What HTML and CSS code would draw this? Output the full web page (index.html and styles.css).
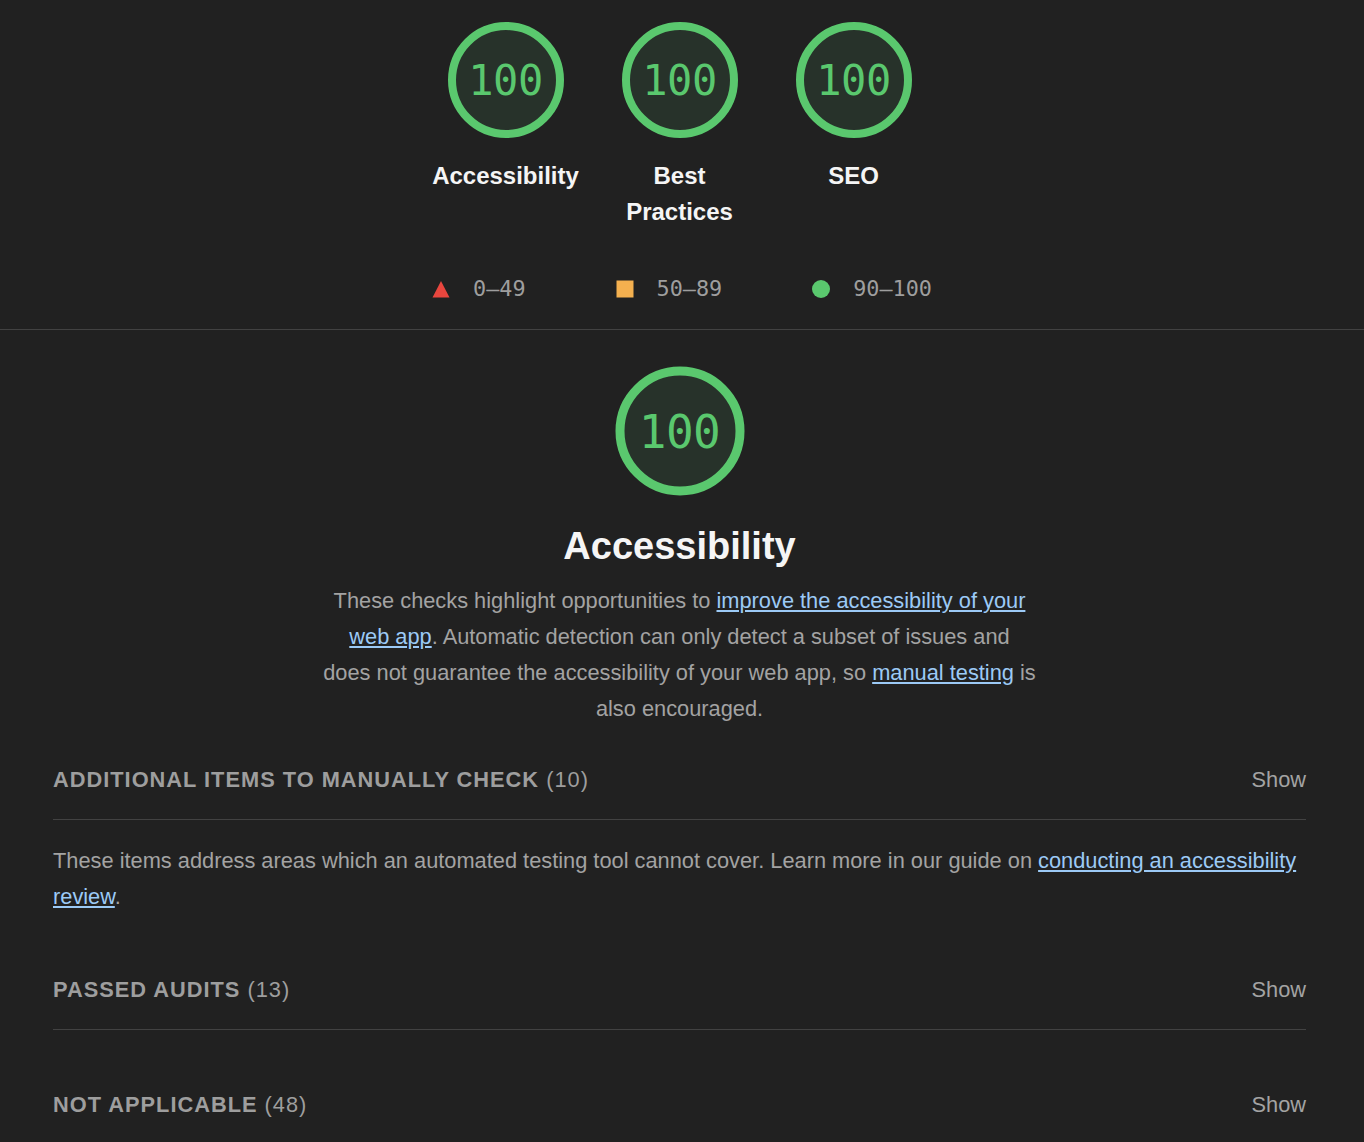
FILE: index.html
```html
<!DOCTYPE html>
<html lang="en">
<head>
<meta charset="utf-8">
<title>Lighthouse Report</title>
<link rel="stylesheet" href="styles.css">
</head>
<body>
<div class="page">
  <header class="summary">
    <div class="gauges">
      <div class="gauge">
        <div class="ring">
          <svg width="116" height="116" viewBox="0 0 116 116"><circle cx="58" cy="58" r="54" class="arc"/></svg>
          <span class="score">100</span>
        </div>
        <div class="gauge-label">Accessibility</div>
      </div>
      <div class="gauge">
        <div class="ring">
          <svg width="116" height="116" viewBox="0 0 116 116"><circle cx="58" cy="58" r="54" class="arc"/></svg>
          <span class="score">100</span>
        </div>
        <div class="gauge-label">Best Practices</div>
      </div>
      <div class="gauge">
        <div class="ring">
          <svg width="116" height="116" viewBox="0 0 116 116"><circle cx="58" cy="58" r="54" class="arc"/></svg>
          <span class="score">100</span>
        </div>
        <div class="gauge-label">SEO</div>
      </div>
    </div>
    <div class="legend">
      <span class="legend-item"><svg width="18" height="18" viewBox="0 0 18 18"><polygon points="9,1 17.5,17.5 0.5,17.5" fill="#e8463e"/></svg><span>0–49</span></span>
      <span class="legend-item"><svg width="18" height="18" viewBox="0 0 18 18"><rect x="0.5" y="0.5" width="17" height="17" fill="#f4b04f"/></svg><span>50–89</span></span>
      <span class="legend-item"><svg width="18" height="18" viewBox="0 0 18 18"><circle cx="9" cy="9" r="9" fill="#5ac86e"/></svg><span>90–100</span></span>
    </div>
  </header>

  <section class="category">
    <div class="category-head">
      <div class="ring big">
        <svg width="130" height="130" viewBox="0 0 130 130"><circle cx="65" cy="65" r="60" class="arc big-arc"/></svg>
        <span class="score big-score">100</span>
      </div>
      <h1 class="category-title">Accessibility</h1>
      <p class="category-desc">These checks highlight opportunities to <a href="#">improve the accessibility of your web app</a>. Automatic detection can only detect a subset of issues and<br>does not guarantee the accessibility of your web app, so <a href="#">manual testing</a> is also encouraged.</p>
    </div>

    <div class="group">
      <div class="group-head">
        <span class="group-title"><b>ADDITIONAL ITEMS TO MANUALLY CHECK</b> (10)</span>
        <span class="show">Show</span>
      </div>
      <p class="group-desc">These items address areas which an automated testing tool cannot cover. Learn more in our guide on <a href="#">conducting an accessibility review</a>.</p>
    </div>

    <div class="group">
      <div class="group-head">
        <span class="group-title"><b>PASSED AUDITS</b> (13)</span>
        <span class="show">Show</span>
      </div>
    </div>

    <div class="group">
      <div class="group-head">
        <span class="group-title"><b>NOT APPLICABLE</b> (48)</span>
        <span class="show">Show</span>
      </div>
    </div>
  </section>
</div>
</body>
</html>
```

FILE: styles.css
```css
* { box-sizing: border-box; }
html, body {
  margin: 0;
  padding: 0;
  background: #212121;
}
body {
  font-family: "Liberation Sans", Arial, sans-serif;
  color: #f5f5f5;
  overflow: hidden;
}
.page {
  width: 1359px;
}
.summary {
  padding-top: 22px;
  border-bottom: 1px solid #424242;
  width: 1364px;
}
.gauges {
  width: 1359px;
  display: flex;
  justify-content: center;
}
.gauge {
  width: 174px;
  display: flex;
  flex-direction: column;
  align-items: center;
}
.ring {
  position: relative;
  width: 116px;
  height: 116px;
}
.ring svg { display: block; }
.arc {
  fill: #27322a;
  stroke: #5ac86e;
  stroke-width: 8;
}
.score {
  position: absolute;
  inset: 0;
  display: flex;
  align-items: center;
  justify-content: center;
  font-family: "DejaVu Sans Mono", "Liberation Mono", monospace;
  font-size: 42px;
  color: #5ac86e;
  letter-spacing: -0.5px;
  padding-top: 1px;
}
.gauge-label {
  margin-top: 20px;
  font-size: 24px;
  font-weight: 700;
  line-height: 36px;
  text-align: center;
  width: 152px;
}
.legend {
  width: 1364px;
  display: flex;
  justify-content: center;
  gap: 90px;
  margin-top: 47px;
  padding-bottom: 28px;
  font-family: "DejaVu Sans Mono", "Liberation Mono", monospace;
  font-size: 21.8px;
  color: #9e9e9e;
  line-height: 24px;
}
.legend-item {
  display: flex;
  align-items: center;
  gap: 23px;
}
.legend-item svg { display: block; }

.category {
  padding: 36px 53px 0 53px;
  width: 1359px;
}
.category-head {
  display: flex;
  flex-direction: column;
  align-items: center;
}
.ring.big {
  width: 130px;
  height: 130px;
}
.big-arc { stroke-width: 9; }
.big-score { font-size: 46px; }
.category-title {
  margin: 27px 0 0;
  font-size: 38px;
  line-height: 46px;
  font-weight: 700;
  color: #f5f5f5;
}
.category-desc {
  margin: 14px 0 0;
  width: 718px;
  text-align: center;
  font-size: 21.8px;
  line-height: 36px;
  color: #a3a3a3;
}
a {
  color: #9ccaf6;
  text-decoration: underline;
}
.group {
  margin-bottom: 57px;
}
.category-head + .group { margin-top: 35px; }
.group-head {
  display: flex;
  justify-content: space-between;
  align-items: center;
  padding-bottom: 21px;
  border-bottom: 1px solid #424242;
  line-height: 36px;
}
.group-title {
  font-size: 21.8px;
  color: #9e9e9e;
  letter-spacing: 1px;
}
.group-title b { font-weight: 700; }
.show {
  font-size: 21.8px;
  color: #a3a3a3;
}
.group-desc {
  margin: 23px 0 0;
  font-size: 21.8px;
  line-height: 36px;
  color: #a3a3a3;
}
```
